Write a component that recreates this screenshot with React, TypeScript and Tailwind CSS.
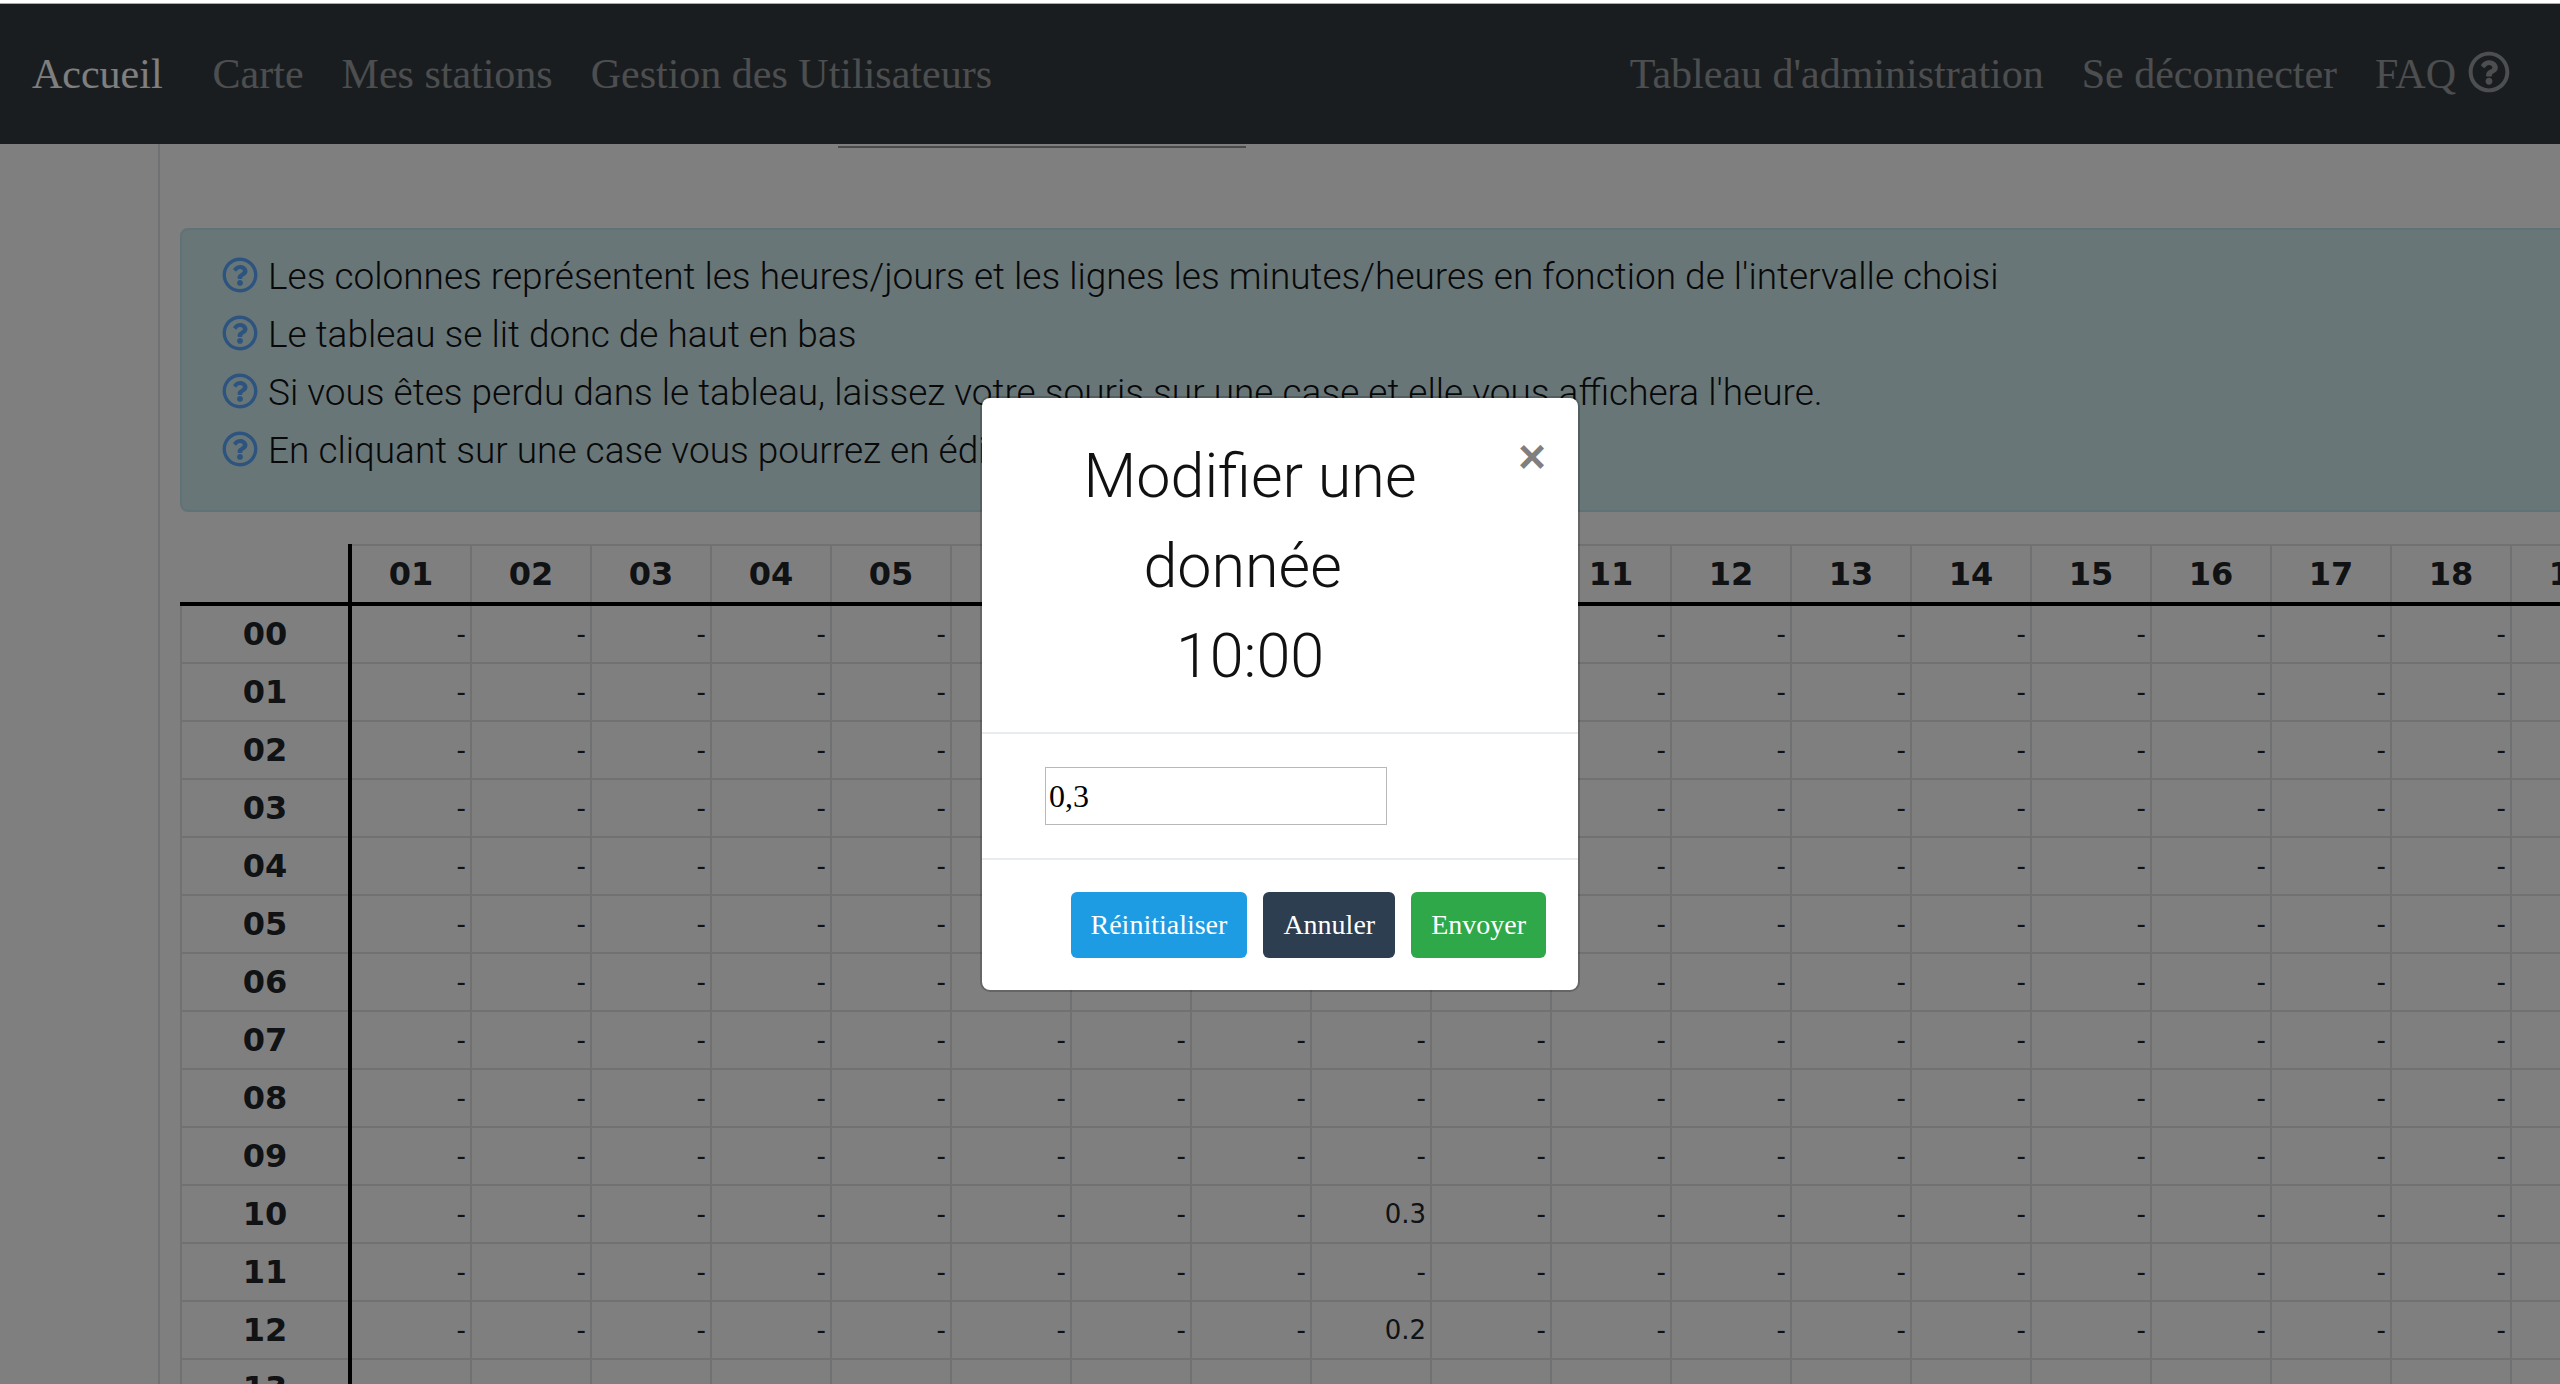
import { FaRegQuestionCircle } from "react-icons/fa";

const pad = (n: number) => String(n).padStart(2, "0");
const hours = Array.from({ length: 24 }, (_, i) => pad(i + 1));
const minutes = Array.from({ length: 14 }, (_, i) => pad(i));

const values: Record<string, string> = {
  "09-10": "0.3",
  "09-12": "0.2",
};

const hints = [
  "Les colonnes représentent les heures/jours et les lignes les minutes/heures en fonction de l'intervalle choisi",
  "Le tableau se lit donc de haut en bas",
  "Si vous êtes perdu dans le tableau, laissez votre souris sur une case et elle vous affichera l'heure.",
  "En cliquant sur une case vous pourrez en éditer la valeur",
];

function NavBar() {
  return (
    <nav className="flex h-[140px] shrink-0 items-center justify-between bg-[#343a40] pl-8 pr-[50px] font-['Liberation_Serif',serif] text-[42px] text-white/50">
      <div className="flex items-center gap-[38px]">
        <a href="#accueil" className="mr-3 text-white">Accueil</a>
        <a href="#carte">Carte</a>
        <a href="#stations">Mes stations</a>
        <a href="#utilisateurs">Gestion des Utilisateurs</a>
      </div>
      <div className="flex items-center gap-[38px]">
        <a href="#administration">Tableau d'administration</a>
        <a href="#deconnexion">Se déconnecter</a>
        <a href="#faq" className="flex items-center gap-3">
          FAQ
          <FaRegQuestionCircle className="-mt-1 size-[42px]" aria-hidden />
        </a>
      </div>
    </nav>
  );
}

function Hints() {
  return (
    <ul className="rounded-lg border-2 border-[#bee5eb] bg-[#d1ecf1] pb-[30px] pl-10 pt-[18px] font-['Roboto',sans-serif] text-[37px] font-light leading-[58px] text-[#111]">
      {hints.map((hint) => (
        <li key={hint} className="flex items-center gap-[10px]">
          <FaRegQuestionCircle className="-mt-1 size-9 text-[#5ba9ff]" aria-hidden />
          {hint}
        </li>
      ))}
    </ul>
  );
}

function DataTable() {
  return (
    <table className="mt-8 table-fixed border-separate border-spacing-0 font-['DejaVu_Sans',sans-serif] text-[#212529]">
      <thead>
        <tr>
          <td className="border-b-4 border-r-4 border-black p-0">
            <div className="w-[168px]" />
          </td>
          {hours.map((hour) => (
            <th key={hour} scope="col" className="border-b-4 border-black p-0 text-[32px] font-bold">
              <div className="flex h-[58px] w-[120px] items-center justify-center border-r-2 border-t-2 border-[#dee2e6]">
                {hour}
              </div>
            </th>
          ))}
        </tr>
      </thead>
      <tbody>
        {minutes.map((minute) => (
          <tr key={minute}>
            <th scope="row" className="border-r-4 border-black p-0 text-[32px] font-bold">
              <div className="flex h-[58px] items-center justify-center border-b-2 border-l-2 border-[#dee2e6]">
                {minute}
              </div>
            </th>
            {hours.map((hour) => (
              <td
                key={hour}
                title={`${hour}:${minute}`}
                className="border-b-2 border-r-2 border-[#dee2e6] p-0 pr-1 text-right align-middle text-[26px] leading-[56px]"
              >
                {values[`${hour}-${minute}`] ?? "-"}
              </td>
            ))}
          </tr>
        ))}
      </tbody>
    </table>
  );
}

function EditDialog() {
  return (
    <div
      role="dialog"
      aria-modal="true"
      aria-labelledby="dialog-title"
      className="w-[600px] rounded-[10px] border-2 border-black/20 bg-white bg-clip-padding"
    >
      <div className="flex items-start border-b-2 border-[#e9ecef] pl-8">
        <h5
          id="dialog-title"
          className="flex-1 pb-[31px] pt-[33px] text-center font-['Roboto',sans-serif] text-[61px] font-light leading-[90px] text-[#111]"
        >
          Modifier une donnée&nbsp;
          <br />
          10:00
        </h5>
        <button
          type="button"
          aria-label="Fermer"
          className="px-8 py-[35px] font-['Liberation_Sans',sans-serif] text-5xl font-bold text-black/50"
        >
          ×
        </button>
      </div>
      <div className="border-b-2 border-[#e9ecef] py-[33px] pl-[63px]">
        <input
          type="text"
          aria-label="Valeur"
          defaultValue="0,3"
          className="block h-[58px] w-[342px] border border-[#b8b8b8] px-[3px] font-['Liberation_Serif',serif] text-[32px] text-black"
        />
      </div>
      <div className="flex justify-end gap-4 p-8 font-['Liberation_Serif',serif] text-[28px] text-white">
        <button type="button" className="h-[66px] rounded-md bg-[#1d9ce3] px-5">Réinitialiser</button>
        <button type="button" className="h-[66px] rounded-md bg-[#2c3e50] px-5">Annuler</button>
        <button type="button" className="h-[66px] rounded-md bg-[#2fa84a] px-5">Envoyer</button>
      </div>
    </div>
  );
}

export default function App() {
  return (
    <div className="flex h-screen flex-col overflow-hidden bg-white">
      <div className="h-1 shrink-0 border-b border-[#aaa] bg-white" />
      <div className="relative flex min-h-0 flex-1 flex-col overflow-hidden">
        <NavBar />
        <main className="ml-[158px] w-max border-l-2 border-[#dee2e6] pl-5 pt-[2px]">
          <hr className="mb-20 ml-[658px] w-[408px] border-t-2 border-[#969696]" />
          <Hints />
          <DataTable />
        </main>
        <div className="absolute inset-0 flex items-center justify-center bg-black/50">
          <EditDialog />
        </div>
      </div>
    </div>
  );
}
